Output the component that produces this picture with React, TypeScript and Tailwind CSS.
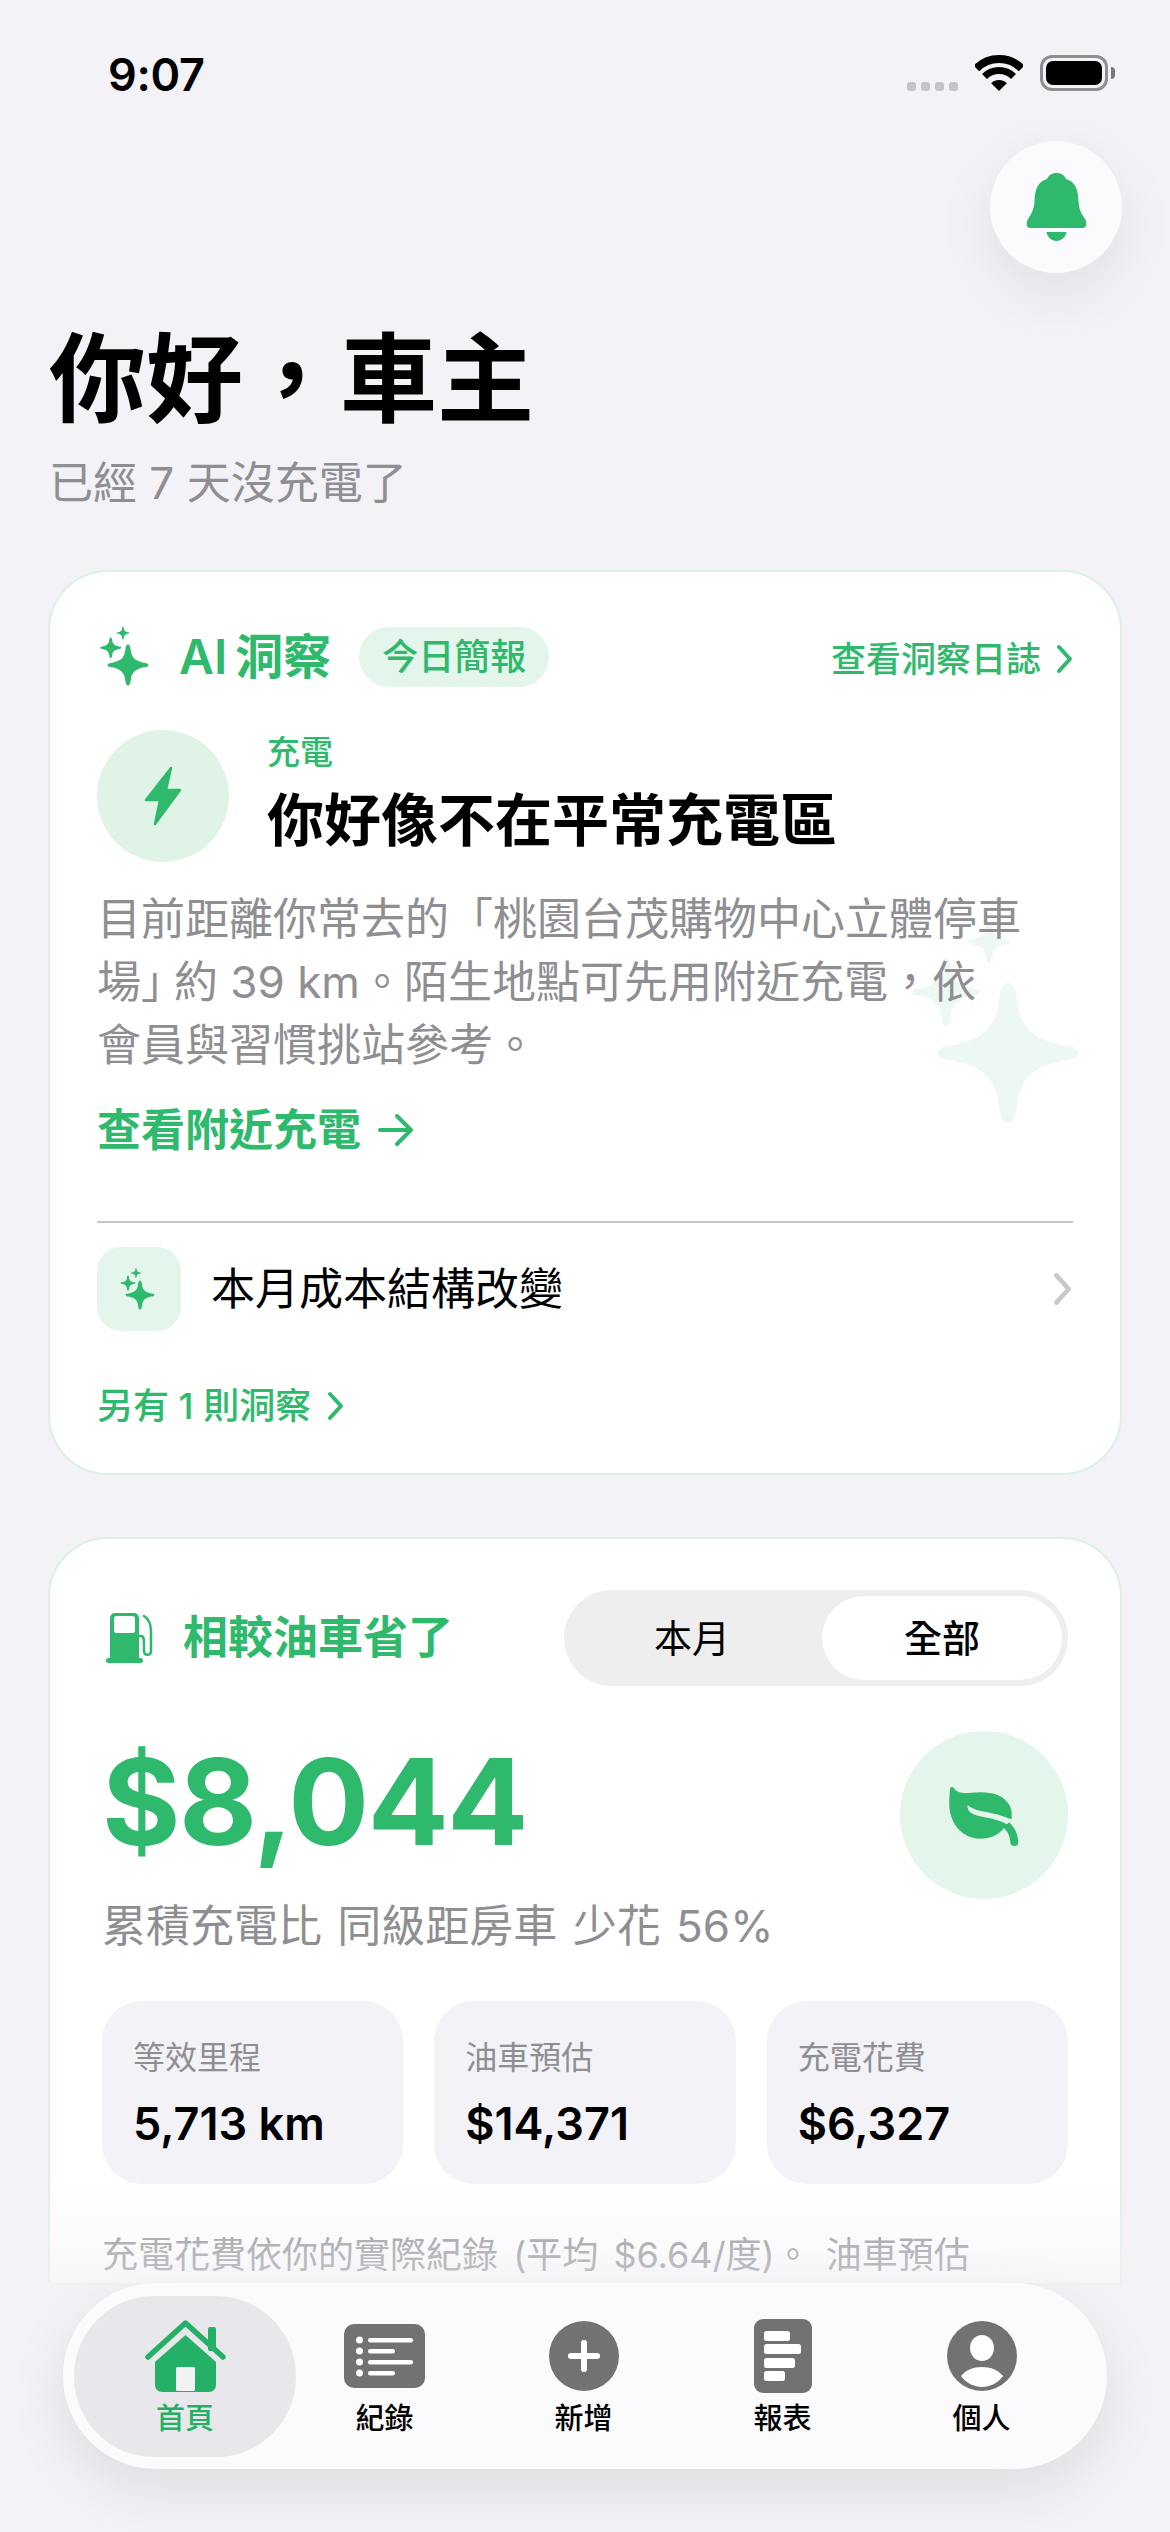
import type { ReactNode } from 'react';

const GREEN = '#2fb96c';

// concave four point star, unit size, scaled by r
function Star({ x, y, r, fill = GREEN }: { x: number; y: number; r: number; fill?: string }) {
  return (
    <path
      transform={`translate(${x} ${y}) scale(${r})`}
      fill={fill}
      d="M0 -1 C.07 -1 .11 -.92 .13 -.75 C.18 -.35 .35 -.18 .9 -.09 C1.03 -.07 1.03 .07 .9 .09 C.35 .18 .18 .35 .13 .75 C.11 .92 .07 1 0 1 C-.07 1 -.11 .92 -.13 .75 C-.18 .35 -.35 .18 -.9 .09 C-1.03 .07 -1.03 -.07 -.9 -.09 C-.35 -.18 -.18 -.35 -.13 -.75 C-.11 -.92 -.07 -1 0 -1 Z"
    />
  );
}

function Chevron({ color = GREEN, className = '' }: { color?: string; className?: string }) {
  return (
    <svg viewBox="0 0 17 30" className={className} fill="none">
      <path d="M3 3 L14 15 L3 27" stroke={color} strokeWidth="4" strokeLinecap="round" strokeLinejoin="round" />
    </svg>
  );
}

function StatusBar() {
  return (
    <div className="h-[141px] pl-[108px] pr-[55px] pt-[46px] flex justify-between items-start">
      <span className="text-[45px] leading-[58px] font-semibold text-black tracking-[-0.3px]">9:07</span>
      <div className="flex items-start pt-[9px]">
        <div className="flex gap-[5px] mt-[27px] mr-[17px]">
          <div className="w-[9px] h-[9px] rounded-[3px] bg-[#c4c4c8]" />
          <div className="w-[9px] h-[9px] rounded-[3px] bg-[#c4c4c8]" />
          <div className="w-[9px] h-[9px] rounded-[3px] bg-[#c4c4c8]" />
          <div className="w-[9px] h-[9px] rounded-[3px] bg-[#c4c4c8]" />
        </div>
        <svg viewBox="0 0 48 36" className="w-[48px] h-[36px] mr-[17px]" fill="none">
          <path d="M1.4 13.4 A32 32 0 0 1 46.6 13.4" stroke="#000" strokeWidth="8" />
          <path d="M9.5 21.5 A20.5 20.5 0 0 1 38.5 21.5" stroke="#000" strokeWidth="7" />
          <path d="M24 36 L16.2 28.2 A11 11 0 0 1 31.8 28.2 Z" fill="#000" />
        </svg>
        <div className="w-[68px] h-[36px] rounded-[12px] border-[3px] border-[#8e8e93] p-[3px]">
          <div className="w-full h-full rounded-[7px] bg-black" />
        </div>
        <div className="w-[4px] h-[12px] mt-[12px] ml-[3px] rounded-r-[4px] bg-[#77777b]" />
      </div>
    </div>
  );
}

function CardOne() {
  return (
    <section className="relative mx-[48px] mt-[57px] rounded-[60px] border-2 border-[#dbf1e5] bg-white px-[47px] pt-[55px] pb-[42px] overflow-hidden">
      {/* sparkle behind the text */}
      <svg viewBox="0 0 192 220" className="absolute left-[840px] top-[340px] w-[192px] h-[220px]">
        <Star x={118} y={141} r={70} fill="#eef8f3" />
        <Star x={56} y={80} r={34} fill="#eef8f3" />
        <Star x={99} y={30} r={21} fill="#eef8f3" />
      </svg>

      <div className="relative flex items-center justify-between h-[60px]">
        <div className="flex items-center">
          <svg viewBox="0 0 50 62" className="w-[50px] h-[62px] ml-[3px] mr-[29px]">
            <Star x={28} y={39} r={20.5} />
            <Star x={10.7} y={21.7} r={10.5} />
            <Star x={23} y={7} r={6.5} />
          </svg>
          <span className="text-[48px] leading-[60px] font-semibold text-[#2fb96c] [word-spacing:-4px]">AI 洞察</span>
          <span className="ml-[28px] h-[60px] w-[190px] rounded-[30px] bg-[#e4f5eb] text-center text-[36px] leading-[60px] font-medium text-[#2fb96c]">今日簡報</span>
        </div>
        <div className="flex items-center gap-[15px] mt-[4px]">
          <span className="text-[35px] leading-[60px] font-medium text-[#2fb96c]">查看洞察日誌</span>
          <Chevron className="w-[17px] h-[30px]" />
        </div>
      </div>

      <div className="relative flex items-center mt-[43px]">
        <div className="w-[132px] h-[132px] rounded-full bg-[#dff4e7] flex items-center justify-center">
          <svg viewBox="0 0 38 60" className="w-[38px] h-[60px]">
            <path d="M27 2 L2 34 H16 L11 58 L36 24 H22 Z" fill={GREEN} stroke={GREEN} strokeWidth="2.5" strokeLinejoin="round" />
          </svg>
        </div>
        <div className="ml-[38px] -mt-[9px]">
          <div className="text-[33px] leading-[48px] font-medium text-[#2fb96c]">充電</div>
          <div className="mt-[10px] text-[57px] leading-[70px] font-bold text-black">你好像不在平常充電區</div>
        </div>
      </div>

      <p className="relative mt-[26px] text-[44px] leading-[63px] text-[#8e8e93]">
        目前距離你常去的「桃園台茂購物中心立體停車場<span className="tracking-[-11px]">」</span>約 39 km。陌生地點可先用附近充電，依
        <br />
        會員與習慣挑站參考。
      </p>

      <div className="relative mt-[23px] flex items-center h-[60px]">
        <span className="text-[44px] leading-[60px] font-semibold text-[#2fb96c]">查看附近充電</span>
        <svg viewBox="0 0 38 34" className="w-[38px] h-[34px] ml-[16px]" fill="none">
          <path d="M3 17 H34 M20 3 L34 17 L20 31" stroke={GREEN} strokeWidth="4" strokeLinecap="round" strokeLinejoin="round" />
        </svg>
      </div>

      <div className="mt-[61px] h-[2px] bg-[#c6c6c8]" />

      <div className="mt-[24px] flex items-center h-[84px]">
        <div className="w-[84px] h-[84px] rounded-[24px] bg-[#e4f5eb]">
          <svg viewBox="0 0 84 84" className="w-[84px] h-[84px]">
            <Star x={43} y={48} r={14.5} />
            <Star x={31} y={36} r={7.5} />
            <Star x={39} y={26} r={5} />
          </svg>
        </div>
        <span className="ml-[30px] flex-1 text-[44px] leading-[60px] text-black">本月成本結構改變</span>
        <Chevron color="#c7c7cc" className="w-[21px] h-[34px]" />
      </div>

      <div className="mt-[50px] flex items-center gap-[16px] h-[50px]">
        <span className="text-[36px] leading-[50px] font-medium text-[#2fb96c]">另有 1 則洞察</span>
        <Chevron className="w-[17px] h-[30px]" />
      </div>
    </section>
  );
}

function Stat({ label, value }: { label: string; value: string }) {
  return (
    <div className="h-[183px] rounded-[40px] bg-[#f2f2f7] pl-[31px] pt-[33px]">
      <div className="text-[32px] leading-[48px] text-[#8e8e93]">{label}</div>
      <div className="mt-[14px] text-[45px] leading-[56px] font-semibold text-black">{value}</div>
    </div>
  );
}

function CardTwo() {
  return (
    <section className="mx-[48px] mt-[62px] rounded-[60px] border-2 border-[#dbf1e5] bg-white px-[52px] pt-[51px] pb-[120px]">
      <div className="flex items-center justify-between h-[96px]">
        <div className="flex items-center">
          <svg viewBox="0 0 49 50" className="w-[49px] h-[50px] ml-[4px] mr-[28px]" fill="none">
            <path d="M9 0 H28 a5 5 0 0 1 5 5 V46 H4 V5 a5 5 0 0 1 5 -5 Z" fill={GREEN} />
            <rect x="8" y="3" width="21" height="17" rx="2.5" fill="#fff" />
            <rect x="0" y="45" width="37" height="5" rx="2.5" fill={GREEN} />
            <path d="M33 23 H35 C38 23 38 27 38 31 V38 C38 43 45 43 45 38 V19 C45 12 43 6 38 3" stroke={GREEN} strokeWidth="2.5" strokeLinecap="round" />
          </svg>
          <span className="text-[45px] leading-[60px] font-semibold text-[#2fb96c]">相較油車省了</span>
        </div>
        <div className="flex w-[504px] h-[96px] rounded-[48px] bg-[#eeeeee] p-[6px]">
          <div className="flex-1 pr-[8px] text-center text-[38px] leading-[84px] text-black">本月</div>
          <div className="w-[240px] rounded-[42px] bg-white text-center text-[38px] leading-[84px] font-medium text-black">全部</div>
        </div>
      </div>

      <div className="mt-[45px] flex items-start justify-between">
        <div>
          <div className="h-[142px] text-[120px] leading-[142px] font-bold text-[#2fb96c] tracking-[-1.5px]">$8,044</div>
          <div className="mt-[23px] text-[44px] leading-[60px] text-[#8e8e93] [word-spacing:3px]">累積充電比 同級距房車 少花 56%</div>
        </div>
        <div className="w-[168px] h-[168px] rounded-full bg-[#e4f5eb] flex items-center justify-center">
          <svg viewBox="132 147 240 210" className="w-[80px] h-[70px]" fill="none">
            <path d="M150 175 C150 166 158 166 162 172 C172 186 190 188 215 185 C260 180 310 185 330 225 C336 240 336 255 334 270 L318 278 C310 305 275 323 240 323 C190 323 150 280 148 225 C147 205 149 190 150 175 Z" fill={GREEN} />
            <path d="M322 285 C335 298 342 315 343 333" stroke={GREEN} strokeWidth="24" strokeLinecap="round" />
            <path d="M203 222 C220 240 260 242 290 250 C310 256 325 262 338 266 L320 280 C300 268 270 262 240 256 C215 250 200 240 203 222 Z" fill="#e4f5eb" />
          </svg>
        </div>
      </div>

      <div className="mt-[45px] grid grid-cols-3 gap-[31px]">
        <Stat label="等效里程" value="5,713 km" />
        <Stat label="油車預估" value="$14,371" />
        <Stat label="充電花費" value="$6,327" />
      </div>

      <p className="mt-[44px] text-[36px] leading-[54px] text-[#8e8e93] [word-spacing:5px]">
        充電花費依你的實際紀錄 (平均 $6.64/度)。 油車預估
      </p>
    </section>
  );
}

function NavItem({ label, children, active }: { label: string; children: ReactNode; active?: boolean }) {
  return (
    <div
      className={
        active
          ? 'w-[222px] h-[161px] -ml-[11px] -mr-[11px] rounded-[80px] bg-[#e8e8ec] flex flex-col items-center'
          : 'w-[199px] h-[161px] flex flex-col items-center'
      }
    >
      <div className="h-[100px] w-full flex items-center justify-center pt-[20px]">{children}</div>
      <span className={active ? 'mt-[5px] text-[29px] leading-[36px] font-medium text-[#27ae65]' : 'mt-[5px] text-[29px] leading-[36px] font-medium text-black'}>
        {label}
      </span>
    </div>
  );
}

function TabBar() {
  return (
    <div className="absolute left-0 right-0 bottom-0 h-[249px] bg-[#f2f2f7]">
      <div className="absolute left-0 right-0 -top-[105px] h-[105px] bg-linear-to-b from-[#f2f2f700] to-[#f2f2f790]" />
      <div className="absolute left-[63px] top-0 w-[1044px] h-[186px] rounded-[93px] bg-[#fbfbfe] shadow-[0_20px_60px_rgba(0,0,0,0.09)] flex items-center pl-[22px]">
        <NavItem label="首頁" active>
          <svg viewBox="0 0 81 72" className="w-[81px] h-[72px]" fill="none">
            <rect x="63" y="7" width="8" height="24" rx="2" fill="#24b066" />
            <path d="M40.5 15 L71 42 V65 a7 7 0 0 1 -7 7 H17 a7 7 0 0 1 -7 -7 V42 Z" fill="#24b066" />
            <path d="M3 37 L40.5 3 L78 37" stroke="#24b066" strokeWidth="5.5" strokeLinecap="round" strokeLinejoin="round" />
            <rect x="31" y="47" width="19" height="24" rx="1.5" fill="#f2f2f5" />
          </svg>
        </NavItem>
        <NavItem label="紀錄">
          <svg viewBox="0 0 81 64" className="w-[81px] h-[64px]" fill="none">
            <rect x="0" y="0" width="81" height="64" rx="10" fill="#727274" />
            <g fill="#fff">
              <circle cx="15.5" cy="16" r="3.5" />
              <circle cx="15.5" cy="27" r="3.5" />
              <circle cx="15.5" cy="38" r="3.5" />
              <circle cx="15.5" cy="49" r="3.5" />
              <rect x="24" y="14" width="45" height="4.5" rx="2.2" />
              <rect x="24" y="25" width="27" height="4.5" rx="2.2" />
              <rect x="24" y="36" width="45" height="4.5" rx="2.2" />
              <rect x="24" y="47" width="27" height="4.5" rx="2.2" />
            </g>
          </svg>
        </NavItem>
        <NavItem label="新增">
          <svg viewBox="0 0 70 70" className="w-[70px] h-[70px]">
            <circle cx="35" cy="35" r="35" fill="#727274" />
            <rect x="32" y="19" width="6" height="32" rx="3" fill="#fff" />
            <rect x="19" y="32" width="32" height="6" rx="3" fill="#fff" />
          </svg>
        </NavItem>
        <NavItem label="報表">
          <svg viewBox="0 0 58 74" className="w-[58px] h-[74px]">
            <rect x="0" y="0" width="58" height="74" rx="9" fill="#727274" />
            <g fill="#fff">
              <rect x="10" y="12" width="26" height="10" rx="2.5" />
              <rect x="10" y="25" width="37" height="10" rx="2.5" />
              <rect x="10" y="39" width="31" height="10" rx="2.5" />
              <rect x="10" y="52" width="21" height="10" rx="2.5" />
            </g>
          </svg>
        </NavItem>
        <NavItem label="個人">
          <svg viewBox="0 0 70 70" className="w-[70px] h-[70px]">
            <circle cx="35" cy="35" r="35" fill="#727274" />
            <ellipse cx="35" cy="27" rx="12" ry="13" fill="#fff" />
            <path d="M14 55 C19 49 26 46 35 46 C44 46 51 49 56 55 C51 62 43 66 35 66 C27 66 19 62 14 55 Z" fill="#fff" />
          </svg>
        </NavItem>
      </div>
    </div>
  );
}

export default function App() {
  return (
    <div className="relative w-[1170px] h-[2532px] overflow-hidden bg-[#f2f2f7] font-['Inter','Noto_Sans_CJK_TC',sans-serif]">
      <StatusBar />
      <div className="flex justify-end pr-[48px]">
        <div className="w-[132px] h-[132px] rounded-full bg-[#fbfbfe] shadow-[0_20px_60px_rgba(0,0,0,0.08)] flex items-center justify-center">
          <svg viewBox="0 0 61 68" className="w-[61px] h-[68px]">
            <path
              fill={GREEN}
              d="M30.5 0 C25.5 0 22.5 2.5 21 6 C12 8.5 9 16 8.5 28 C8 36 6 40 2 46 C0 49 0 55 4 55 H57 C61 55 61 49 59 46 C55 40 53 36 52.5 28 C52 16 49 8.5 40 6 C38.5 2.5 35.5 0 30.5 0 Z M20.5 59 H40.5 C39.5 64.5 35.5 68 30.5 68 C25.5 68 21.5 64.5 20.5 59 Z"
            />
          </svg>
        </div>
      </div>
      <h1 className="mt-[50px] ml-[49px] text-[97px] leading-[112px] font-bold text-black">你好，車主</h1>
      <p className="mt-[18px] ml-[49px] text-[44px] leading-[60px] text-[#8e8e93]">已經 7 天沒充電了</p>
      <CardOne />
      <CardTwo />
      <TabBar />
    </div>
  );
}
